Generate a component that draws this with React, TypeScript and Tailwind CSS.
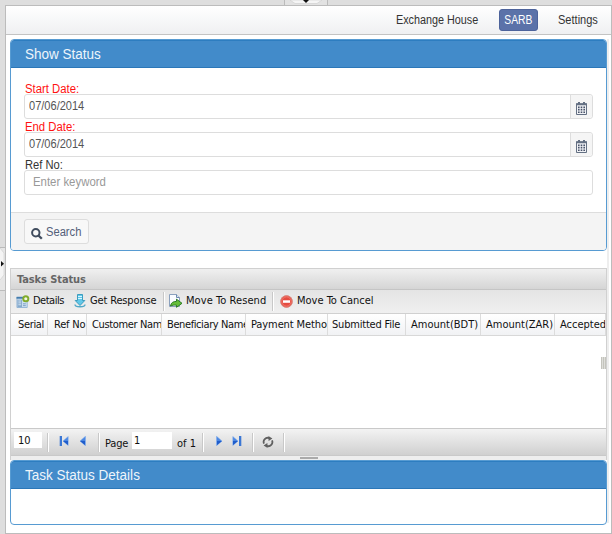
import type { ReactNode } from "react";

const sans = "font-['Liberation_Sans',Arial,sans-serif]";
const tahoma = "font-['DejaVu_Sans_Condensed','DejaVu_Sans',sans-serif] [font-stretch:condensed]";

function Calendar() {
  return (
    <svg width="11" height="13" viewBox="0 0 11 13" className="mt-[3px]">
      <path d="M.5 2h10v10.5H.5z" fill="#f1f2f5" stroke="#647083" />
      <path d="M0 1.3h11v2H0z" fill="#647083" />
      <path d="M2 0h2v2H2zM7 0h2v2H7z" fill="#647083" />
      <path d="M2 4.5h1.6v1.7H2zM4.7 4.5h1.6v1.7H4.7zM7.4 4.5H9v1.7H7.4zM2 7h1.6v1.6H2zM4.7 7h1.6v1.6H4.7zM7.4 7H9v1.6H7.4zM2 9.5h1.6v1.5H2zM4.7 9.5h1.6v1.5H4.7zM7.4 9.5H9v1.5H7.4z" fill="#48536a" />
    </svg>
  );
}

function DateField({ label }: { label: string }) {
  return (
    <div className="h-[38px]">
      <div className="h-[11px] origin-left scale-x-[0.945] pl-[1px] text-[12px] leading-[12px] text-[#f11]">{label}</div>
      <div className="flex h-[25px] rounded-[3px] border border-[#ddd] bg-white">
        <div className="flex-1 pl-[4px] text-[12px] leading-[23px] text-[#555]">
          <span className="inline-block origin-left scale-x-[0.92]">07/06/2014</span>
        </div>
        <div className="flex w-[22px] items-center justify-center rounded-r-[3px] border-l border-[#ddd] bg-[#f5f5f5]">
          <Calendar />
        </div>
      </div>
    </div>
  );
}

function PanelHeader({ children }: { children: ReactNode }) {
  return (
    <div className="h-[28px] shrink-0 rounded-t-[3px] border-y border-t-[#2d7dc0] border-b-[#2b77b8] bg-[#428bca] pl-[14px] text-[14px] leading-[27px] text-[#eef5fb]">
      <span className="inline-block origin-left scale-x-[0.965]">{children}</span>
    </div>
  );
}

function Tool({ icon, text, style }: { icon: ReactNode; text: string; style: string }) {
  return (
    <div className="flex h-full items-center">
      <span className="mr-[3px] mb-[1px] flex w-[15px] shrink-0 justify-center">{icon}</span>
      <span className={`${style} whitespace-nowrap`}>{text}</span>
    </div>
  );
}

const Divider = () => (
  <div className="h-[19px] w-[2px] shrink-0 border-l border-r border-l-[#c8c8c8] border-r-white" />
);

const DetailsIcon = (
  <svg width="14" height="13" viewBox="0 0 14 14">
    <path d="M.5 2.5h11v11H.5z" fill="#d0e2f2" stroke="#8fb2d4" />
    <path d="M0 2h7v2H0z" fill="#437cad" />
    <path d="M1 5h5v8H1z" fill="#86a9cc" />
    <path d="M2 6.5h3M2 8.5h3M2 10.5h3" stroke="#d7e8f5" />
    <path d="M7 9.5h3M7 11.5h3" stroke="#7299bf" />
    <circle cx="10" cy="4" r="3.8" fill="#81ac2c" />
    <circle cx="10" cy="4" r="1.7" fill="#f1f5df" />
  </svg>
);

const ResponseIcon = (
  <svg width="12" height="14" viewBox="0 0 12 14">
    <path d="M3.5.5h5v6h2.3L6 11.5 1.2 6.5h2.3z" fill="#62c8e9" stroke="#3d9dbf" strokeLinejoin="round" />
    <path d="M4 2.5h4M4 4.5h4" stroke="#d9f6ff" />
    <path d="M1 10.5c0 3 10 3 10 0" fill="none" stroke="#51a8c7" strokeWidth="1.4" />
  </svg>
);

const ResendIcon = (
  <svg width="15" height="14" viewBox="0 0 15 14">
    <path d="M1.5.5h7l3 3v9h-10z" fill="#fafcff" stroke="#8aa0bd" />
    <path d="M8.5.5v3h3" fill="#dce6f3" stroke="#6d89ad" />
    <path d="M2.5 12c.6-3.5 2.8-4.6 6-4.6V5.2L14 9.3l-5.5 4v-2.2c-2.6 0-4.2 0-6 .9z" fill="#65bd38" stroke="#2b7b24" strokeLinejoin="round" />
  </svg>
);

const CancelIcon = (
  <svg width="13" height="13" viewBox="0 0 13 13">
    <circle cx="6.5" cy="6.5" r="5.9" fill="#e64c41" stroke="#d88980" />
    <circle cx="6.5" cy="6.5" r="4.7" fill="none" stroke="#f28b80" strokeWidth=".7" />
    <path d="M3 5.3h7v2.5H3z" fill="#fff" />
  </svg>
);

function PageArrow({ flip = false, bar = false }: { flip?: boolean; bar?: boolean }) {
  return (
    <svg width="10" height="10" viewBox="0 0 10 10" className={flip ? "-scale-x-100" : ""}>
      <path d={bar ? "M.8.5v9L6 5z" : "M2.5.2v9.6L8 5z"} fill="#4a86e2" stroke="#78a8ee" strokeWidth=".5" />
      <path d={bar ? "M1 5h5L1 9z" : "M3 5h5L3 9z"} fill="#205dcb" />
      {bar && <path d="M7 0h2.3v10H7z" fill="#3b77d4" />}
    </svg>
  );
}

const columns = [
  { label: "Serial", cell: "w-[37px] pl-[7px] tracking-[-0.35px]" },
  { label: "Ref No", cell: "w-[39px] pl-[6px] tracking-[-0.2px]" },
  { label: "Customer Nam", cell: "w-[75px] pl-[5px] tracking-[-0.35px]" },
  { label: "Beneficiary Name", cell: "w-[84px] pl-[5px] tracking-[-0.4px]" },
  { label: "Payment Metho", cell: "w-[82px] pl-[5px] tracking-[-0.1px]" },
  { label: "Submitted File", cell: "w-[78px] pl-[4px] tracking-[-0.2px]" },
  { label: "Amount(BDT)", cell: "w-[75px] pl-[5px]" },
  { label: "Amount(ZAR)", cell: "w-[74px] pl-[5px]" },
  { label: "Accepted", cell: "w-[51px] pl-[5px]" },
];

export default function App() {
  return (
    <div className={`${sans} flex h-[534px] w-[612px] flex-col overflow-hidden bg-[#dedede] text-[#333]`}>
      <div className="flex h-[5px] shrink-0 justify-center">
        <div className="flex w-[44px] justify-center border-x border-[#bbb] bg-[#e2e2e2]">
          <svg width="32" height="5" viewBox="0 0 32 5">
            <path d="M0 0h32l-5 3.5H5z" fill="#f5f5f5" stroke="#ccc" strokeWidth=".6" />
            <path d="M13 0h6l-3 3z" fill="#111" />
          </svg>
        </div>
      </div>
      <div className="flex min-h-0 flex-1">
        <div className="flex w-[5px] shrink-0 flex-col pt-[242px]">
          <div className="flex h-[44px] items-start border-y border-[#bbb] bg-[#e6e6e6]">
            <svg width="5" height="32" viewBox="0 0 5 32">
              <path d="M0 0l4 5v22l-4 5" fill="#f4f4f4" stroke="#ccc" strokeWidth=".6" />
              <path d="M1 13l3 2.7-3 2.8z" fill="#111" />
            </svg>
          </div>
        </div>
        <div className="flex w-[607px] shrink-0 flex-col border border-[#bcbcbc] bg-white">
          <nav className="flex h-[29px] shrink-0 items-center justify-end border-b border-[#c3c3c3] bg-gradient-to-b from-white to-[#eff0f2] pr-[13px] text-[12px]">
            <span className="mr-[21px] w-[82px] origin-left scale-x-[0.9] whitespace-nowrap">Exchange House</span>
            <span className="mr-[20px] flex h-[22px] w-[39px] items-center justify-center rounded-[3px] border border-[#4d639b] bg-[#5b72a9] text-white">
              <span className="inline-block scale-x-[0.86]">SARB</span>
            </span>
            <span className="w-[40px] origin-left scale-x-[0.92]">Settings</span>
          </nav>
          <main className="mt-[4px] flex min-h-0 flex-1 pl-[4px]">
            <div className="flex w-[597px] shrink-0 flex-col">
              <section className="flex h-[212px] shrink-0 flex-col overflow-hidden rounded-[4px] border border-[#579bd2] bg-white">
                <PanelHeader>Show Status</PanelHeader>
                <div className="h-[144px] shrink-0 px-[13px] pt-[15px]">
                  <DateField label="Start Date:" />
                  <DateField label="End Date:" />
                  <div className="h-[11px] origin-left scale-x-[0.93] pl-[1px] text-[12px] leading-[12px]">Ref No:</div>
                  <div className="h-[25px] rounded-[3px] border border-[#ddd] pl-[8px] text-[12px] leading-[23px] text-[#999]">
                    <span className="inline-block origin-left scale-x-[0.95]">Enter keyword</span>
                  </div>
                </div>
                <div className="flex-1 border-t border-[#ddd] bg-[#f4f4f4] px-[13px] pt-[6px]">
                  <div className="flex h-[25px] w-[65px] items-center rounded-[3px] border border-[#ddd] bg-[#f8f8f8] pl-[6px] text-[12px] text-[#536078]">
                    <svg width="12" height="12" viewBox="0 0 12 12" className="mt-[4px] mr-[3px]">
                      <circle cx="4.8" cy="4.8" r="3.7" fill="none" stroke="#404c5e" strokeWidth="2" />
                      <path d="M7.5 7.5l3.3 3.3" stroke="#404c5e" strokeWidth="2.3" />
                    </svg>
                    <span className="origin-left scale-x-[0.93]">Search</span>
                  </div>
                </div>
              </section>
              <section className={`${tahoma} mt-[17px] flex h-[192px] shrink-0 flex-col border-x border-t border-[#d0d0d0] text-[11px] text-[#111]`}>
                <div className="h-[21px] shrink-0 border-b border-[#c5c5c5] bg-gradient-to-b from-[#f0f0f0] to-[#d5d5d5] pl-[6px] font-bold leading-[21px] tracking-[-0.1px] text-[#666]">Tasks Status</div>
                <div className="flex h-[24px] shrink-0 items-center border-b border-[#d0d0d0] bg-gradient-to-b from-[#e4e4e4] to-[#f0f0f0] pl-[4px]">
                  <Tool icon={DetailsIcon} text="Details" style="w-[39px] tracking-[-0.5px]" />
                  <Tool icon={ResponseIcon} text="Get Response" style="w-[73px] tracking-[-0.15px]" />
                  <Divider />
                  <div className="ml-[3px]"><Tool icon={ResendIcon} text="Move To Resend" style="w-[86px] tracking-[0.07px]" /></div>
                  <Divider />
                  <div className="ml-[5px]"><Tool icon={CancelIcon} text="Move To Cancel" style="w-[90px]" /></div>
                </div>
                <div className="flex h-[22px] shrink-0 overflow-hidden border-b border-[#d8d8d8] bg-gradient-to-b from-white to-[#f1f2f4]">
                  {columns.map(({ label, cell }) => (
                    <div key={label} className={`${cell} shrink-0 overflow-hidden whitespace-nowrap border-r border-[#dcdcdc] leading-[21px]`}>{label}</div>
                  ))}
                </div>
                <div className="flex flex-1 items-start justify-end">
                  <svg width="5" height="12" viewBox="0 0 5 12" className="mt-[21px]">
                    <path d="M0 0h5v12H0z" fill="#c4c4bd" /><path d="M1.5 0v12M3.5 0v12" stroke="#dededa" />
                  </svg>
                </div>
                <div className="flex h-[28px] shrink-0 items-start border-y border-[#c9c9c9] bg-gradient-to-b from-[#f3f3f3] to-[#d0d0d0]">
                  <div className="mt-[3px] ml-[3px] h-[16px] w-[28px] bg-white pl-[4px] leading-[17px]">10</div>
                  <div className="mt-[4px] ml-[5px]"><Divider /></div>
                  <div className="mt-[7px] ml-[10px] flex gap-[9px]"><PageArrow flip bar /><PageArrow flip /></div>
                  <div className="mt-[4px] ml-[10px]"><Divider /></div>
                  <span className="mt-[7px] ml-[5px] w-[27px] leading-[15px] tracking-[-0.2px]">Page</span>
                  <div className="mt-[3px] h-[17px] w-[40px] bg-white pl-[2px] leading-[18px]">1</div>
                  <span className="mt-[7px] ml-[5px] w-[25px] whitespace-nowrap leading-[15px]">of 1</span>
                  <div className="mt-[4px]"><Divider /></div>
                  <div className="mt-[7px] ml-[10px] flex gap-[8px]"><PageArrow /><PageArrow bar /></div>
                  <div className="mt-[4px] ml-[10px]"><Divider /></div>
                  <svg width="12" height="12" viewBox="0 0 12 12" className="mt-[7px] ml-[8px]">
                    <path d="M2 7.6A4.1 4.1 0 0 1 7.2 2.1M10 4.4A4.1 4.1 0 0 1 4.8 9.9" fill="none" stroke="#606060" strokeWidth="1.8" />
                    <path d="M6.4 0l4 2.4-3.8 2.5zM5.6 12l-4-2.4 3.8-2.5z" fill="#606060" />
                  </svg>
                  <div className="mt-[4px] ml-[9px]"><Divider /></div>
                </div>
                <div className="flex h-[4px] shrink-0 items-center justify-center bg-[#eee]"><div className="h-[2px] w-[18px] bg-[#aaa]" /></div>
              </section>
              <section className="flex h-[65px] shrink-0 flex-col overflow-hidden rounded-[4px] border border-[#579bd2] bg-white">
                <PanelHeader>Task Status Details</PanelHeader>
              </section>
            </div>
            <div className="mb-[10px] w-[2px] bg-[#eee]" />
          </main>
        </div>
      </div>
    </div>
  );
}
